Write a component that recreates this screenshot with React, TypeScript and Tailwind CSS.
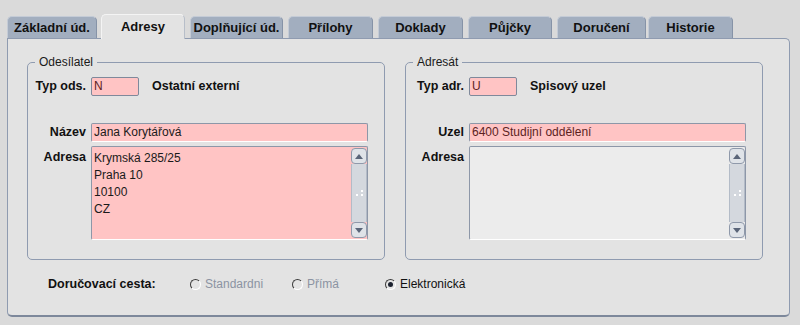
import React from 'react';

const TABS = [
  { label: 'Základní úd.', w: 'w-[90px]', ml: 'ml-0' },
  { label: 'Adresy', w: 'w-[84px]', ml: 'ml-[4px]', active: true },
  { label: 'Doplňující úd.', w: 'w-[93px]', ml: 'ml-[5px]' },
  { label: 'Přílohy', w: 'w-[85px]', ml: 'ml-[5px]' },
  { label: 'Doklady', w: 'w-[85px]', ml: 'ml-[5px]' },
  { label: 'Půjčky', w: 'w-[84px]', ml: 'ml-[5px]' },
  { label: 'Doručení', w: 'w-[89px]', ml: 'ml-[5px]' },
  { label: 'Historie', w: 'w-[85px]', ml: 'ml-[2px]' },
];

function Arrow({ up }: { up?: boolean }) {
  return (
    <svg width="8" height="5" viewBox="0 0 8 5">
      {up ? <path d="M0 5 L4 0 L8 5 Z" fill="#5a6579" /> : <path d="M0 0 L4 5 L8 0 Z" fill="#5a6579" />}
    </svg>
  );
}

function ScrollBar() {
  return (
    <div className="flex flex-col w-[16px] h-full py-px">
      <div className="h-[16px] flex items-center justify-center border border-[#8f99aa] rounded-[4px] bg-[#dfe3e8]">
        <Arrow up />
      </div>
      <div className="flex-1 relative border-x border-[#b3bbc7] bg-[#d4d8de]">
        <div className="absolute left-[4px] top-1/2 -translate-y-1/2 flex flex-col gap-[2px]">
          <div className="flex justify-end"><span className="w-[2px] h-[2px] bg-white" /></div>
          <div className="flex gap-[3px]"><span className="w-[2px] h-[2px] bg-white" /><span className="w-[2px] h-[2px] bg-white" /></div>
        </div>
      </div>
      <div className="h-[16px] flex items-center justify-center border border-[#8f99aa] rounded-[4px] bg-[#dfe3e8]">
        <Arrow />
      </div>
    </div>
  );
}

function Radio({ label, checked, disabled, w }: { label: string; checked?: boolean; disabled?: boolean; w: string }) {
  return (
    <div className={`flex items-center gap-[4px] ${w}`}>
      <span className="w-[11px] h-[11px] rounded-full border border-t-[#3c3c3c] border-l-[#3c3c3c] border-b-white border-r-white bg-[#e4e4e4] flex items-center justify-center">
        {checked && <span className="w-[5px] h-[5px] rounded-full bg-[#1c2230]" />}
      </span>
      <span className={disabled ? 'text-[#8b93a2]' : 'text-[#111]'}>{label}</span>
    </div>
  );
}

function Fieldset({ legend, typLabel, typValue, typText, nameLabel, nameValue, lines, pink }: {
  legend: string; typLabel: string; typValue: string; typText: string;
  nameLabel: string; nameValue: string; lines: string[]; pink: boolean;
}) {
  return (
    <fieldset className="w-[358px] border border-[#8f9bb0] rounded-[5px] pt-[8px] pb-[19px]">
      <legend className="ml-[7px] px-[4px] leading-[14px] text-[#1a1a1a]">{legend}</legend>
      <div className="grid grid-cols-[58px_1fr] gap-x-[5px] pr-[16px]">
        <div className="h-[19px] flex items-center justify-end font-bold text-[12.5px]">{typLabel}</div>
        <div className="flex items-center">
          <div className="w-[48px] h-[19px] border border-[#7f899b] rounded-[2px] bg-[#ffc4c4] pl-[2px] leading-[17px] text-[#5c1f1f]">{typValue}</div>
          <span className="ml-[13px] font-bold text-[12.5px]">{typText}</span>
        </div>

        <div className="mt-[27px] h-[19px] flex items-center justify-end font-bold text-[12.5px]">{nameLabel}</div>
        <div className={`mt-[27px] h-[19px] border border-[#8d97a8] border-b-white rounded-[2px] bg-[#ffc4c4] pl-[2px] leading-[17px] ${pink ? 'text-[#1a1a1a]' : 'text-[#5c1f1f]'}`}>{nameValue}</div>

        <div className="mt-[4px] pt-[3px] text-right font-bold text-[12.5px] leading-[17px]">Adresa</div>
        <div className={`mt-[4px] h-[94px] flex border border-[#8d97a8] border-b-white rounded-[2px] ${pink ? 'bg-[#ffc4c4]' : 'bg-[#ececec]'}`}>
          <div className="flex-1 pl-[2px] pt-[3px] leading-[17px] text-[#1a1a1a]">
            {lines.map(l => <div key={l}>{l}</div>)}
          </div>
          <ScrollBar />
        </div>
      </div>
    </fieldset>
  );
}

export default function App() {
  return (
    <div className="w-[800px] h-[325px] bg-[#dadada] pt-[14px] pl-[7px] text-[12px] text-[#111]" style={{ fontFamily: '"Liberation Sans", Arial, sans-serif' }}>
      <div className="flex items-end h-[24px]">
        {TABS.map(t => (
          <div key={t.label}
            className={`${t.w} ${t.ml} flex items-center justify-center font-bold text-[13px] rounded-t-[5px] border border-b-0 ${t.active
              ? 'h-[25px] -mb-px relative z-10 bg-[#e3e3e3] border-[#f4f4f4] border-r-[#b7bec9]'
              : 'h-[22px] bg-[#a2aebf] border-[#c4cbd6] border-r-[#8693a7]'}`}>
            {t.label}
          </div>
        ))}
      </div>
      <div className="w-[783px] h-[279px] bg-[#e3e3e3] border border-[#8f9bb0] border-b-2 border-b-[#7d889b] rounded-b-[5px] rounded-tr-[5px] pl-[19px] pt-[16px]">
        <div className="flex gap-[20px]">
          <Fieldset legend="Odesílatel" typLabel="Typ ods." typValue="N" typText="Ostatní externí"
            nameLabel="Název" nameValue="Jana Korytářová" lines={['Krymská 285/25', 'Praha 10', '10100', 'CZ']} pink />
          <Fieldset legend="Adresát" typLabel="Typ adr." typValue="U" typText="Spisový uzel"
            nameLabel="Uzel" nameValue="6400 Studijní oddělení" lines={[]} pink={false} />
        </div>
        <div className="flex items-center mt-[16px] ml-[21px] h-[16px]">
          <div className="w-[142px] font-bold text-[12.5px]">Doručovací cesta:</div>
          <Radio label="Standardni" disabled w="w-[102px]" />
          <Radio label="Přímá" disabled w="w-[93px]" />
          <Radio label="Elektronická" checked w="w-[120px]" />
        </div>
      </div>
    </div>
  );
}
